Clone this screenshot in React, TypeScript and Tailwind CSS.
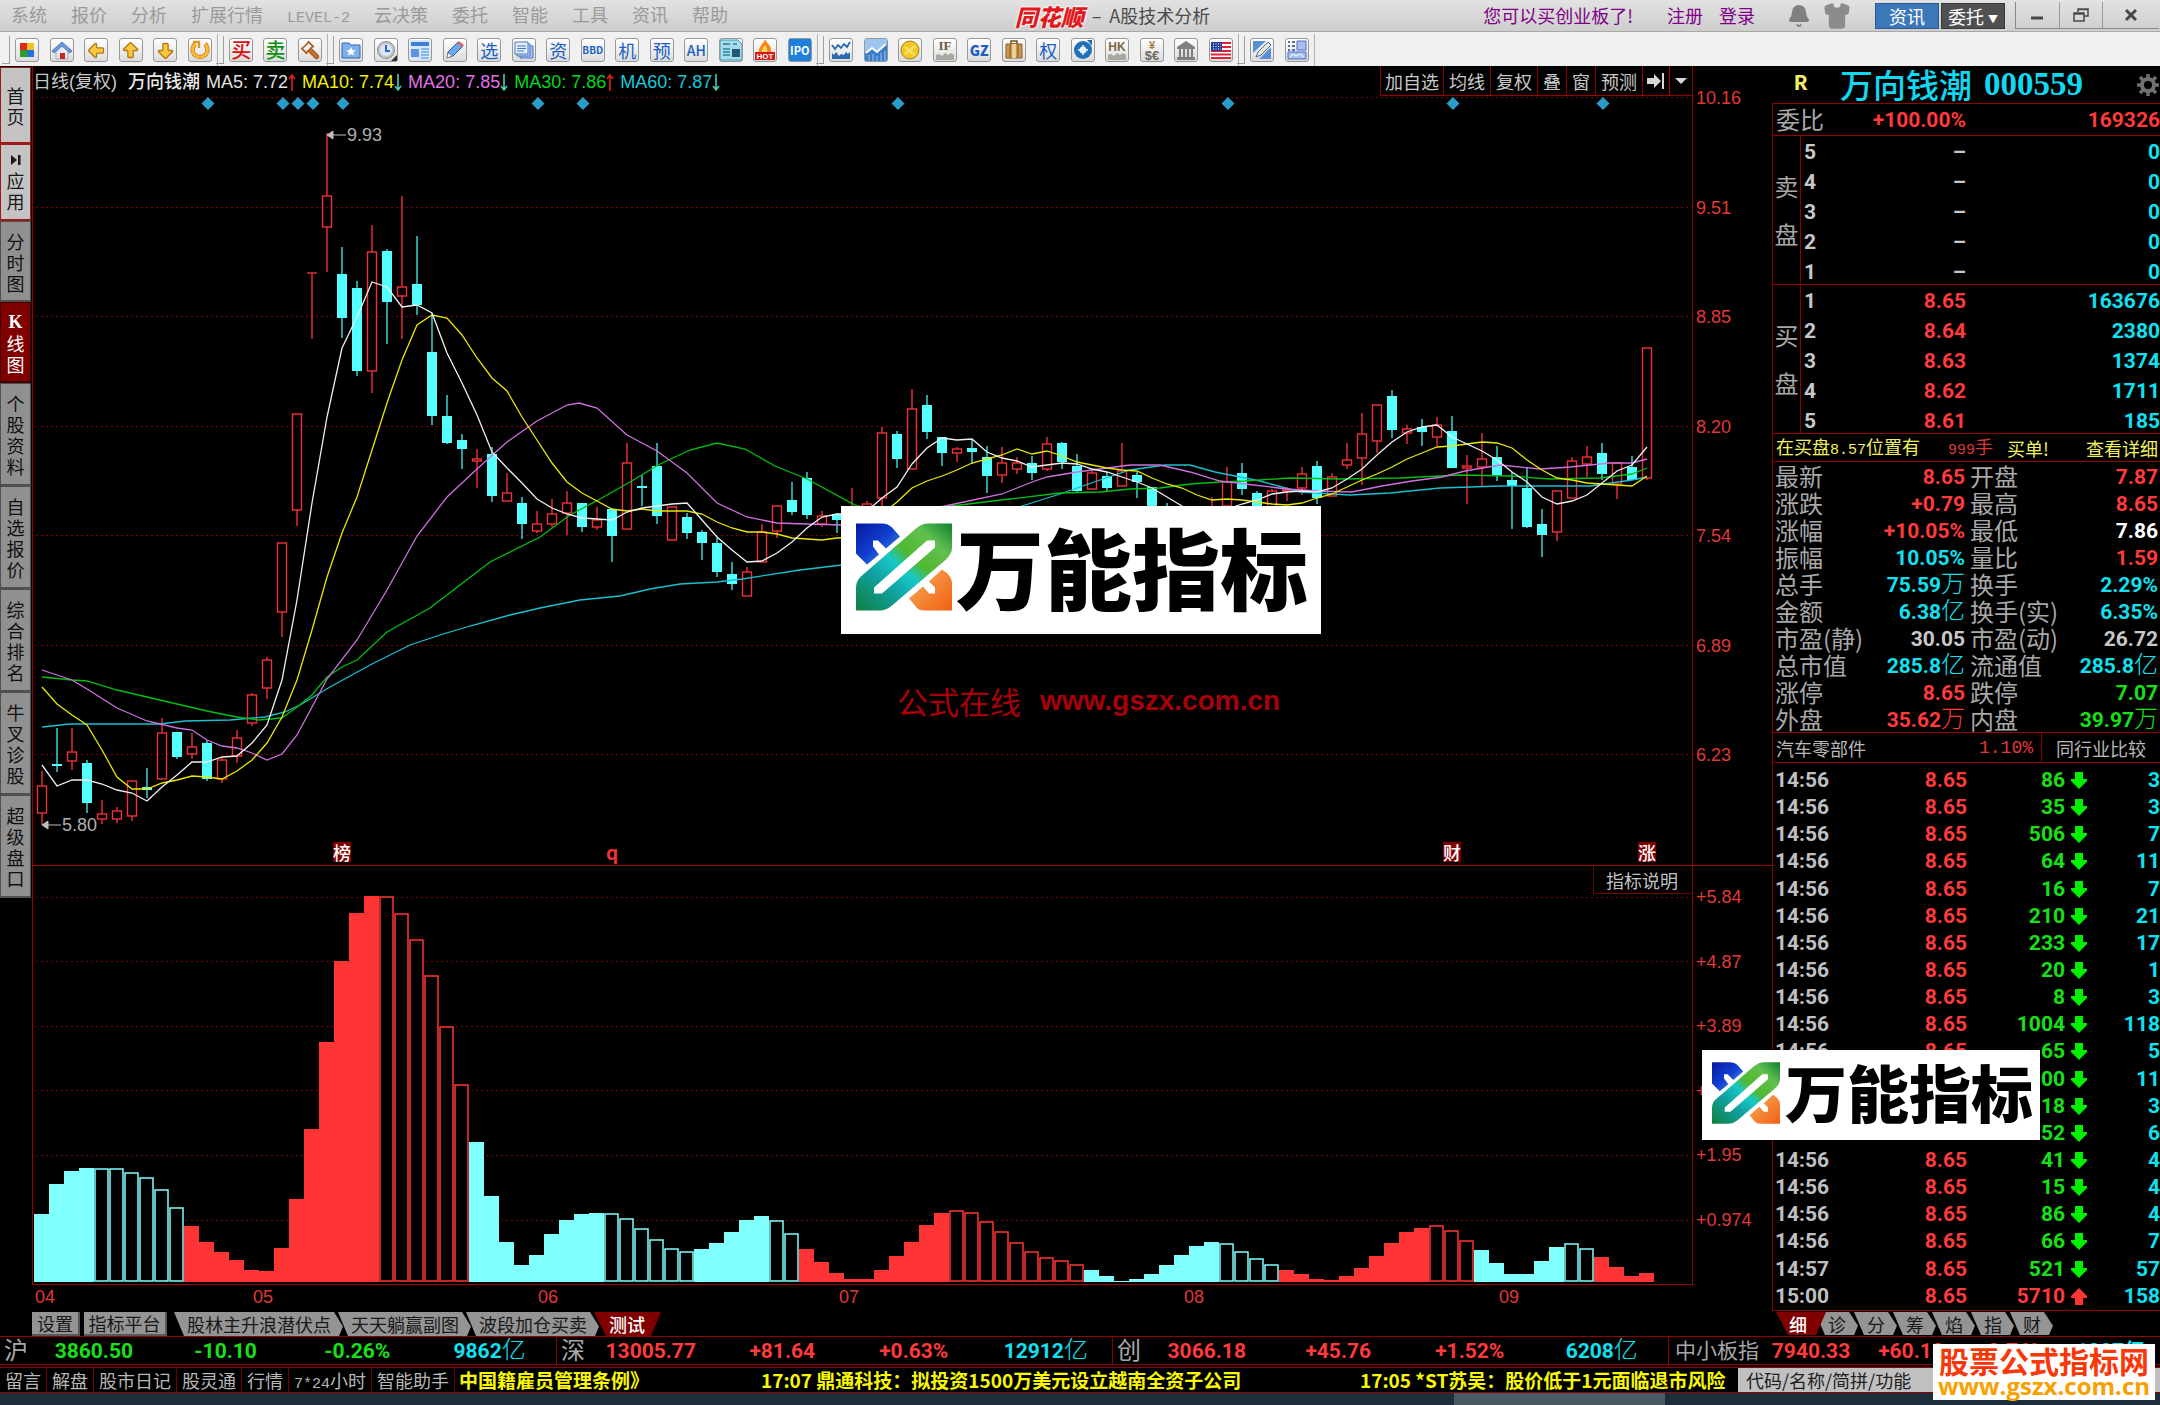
import React from 'react';
import { ArrowBigDown, ArrowBigLeft, ArrowBigUp, Bell, Gavel, Shirt } from 'lucide-react';

type Candle = [high: number, top: number, bottom: number, low: number, up: 0 | 1];
type Point = [number, number];

const FIRST_X = 42;
const STEP = 15;

// high, body top, body bottom, low, rising
const candles: (Candle | null)[] = [
  [771, 786, 813, 825, 1], [728, 764, 766, 772, 0], [728, 752, 761, 770, 1], [760, 763, 803, 813, 0],
  [800, 814, 819, 824, 1], [807, 811, 819, 823, 1], [780, 781, 816, 821, 1], [768, 787, 790, 798, 0],
  [718, 733, 779, 779, 1], [732, 732, 757, 759, 0], [733, 747, 754, 759, 1], [740, 743, 779, 781, 0],
  [757, 760, 779, 783, 1], [730, 738, 756, 763, 1], [693, 695, 723, 726, 1], [657, 660, 688, 699, 1],
  [543, 543, 612, 637, 1], [414, 414, 510, 526, 1], [273, 273, 273, 339, 1], [133, 196, 227, 272, 1],
  [247, 274, 318, 338, 0], [281, 288, 371, 376, 0], [225, 252, 371, 393, 1], [249, 251, 302, 344, 0],
  [196, 287, 296, 339, 1], [236, 284, 305, 315, 0], [313, 352, 416, 425, 0], [395, 416, 443, 444, 0],
  [434, 440, 449, 469, 0], [449, 459, 461, 488, 1], [447, 454, 496, 502, 0], [473, 493, 501, 501, 1],
  [497, 503, 524, 539, 0], [511, 524, 531, 533, 1], [499, 514, 524, 527, 1], [491, 503, 513, 535, 1],
  [503, 503, 527, 532, 0], [507, 520, 527, 530, 1], [509, 509, 536, 562, 0], [443, 463, 529, 529, 1],
  [475, 486, 488, 506, 0], [443, 466, 516, 524, 0], [507, 507, 540, 540, 1], [513, 517, 533, 539, 0],
  [530, 532, 543, 560, 0], [538, 543, 572, 577, 0], [562, 574, 584, 590, 0], [567, 572, 596, 596, 1],
  [524, 532, 562, 562, 1], [505, 506, 531, 538, 1], [482, 500, 512, 515, 0], [472, 478, 515, 519, 0],
  [511, 516, 524, 527, 1], [513, 514, 520, 533, 0], [488, 509, 530, 530, 1], [501, 504, 520, 520, 1],
  [427, 433, 498, 507, 1], [431, 434, 459, 468, 0], [389, 409, 469, 469, 1], [395, 405, 432, 439, 0],
  [437, 437, 453, 466, 0], [447, 449, 453, 462, 1], [440, 448, 452, 464, 0], [446, 457, 476, 493, 0],
  [447, 463, 475, 483, 1], [457, 463, 469, 474, 1], [456, 463, 473, 480, 0], [437, 444, 469, 471, 1],
  [442, 443, 462, 469, 0], [454, 466, 491, 493, 0], [470, 473, 489, 489, 1], [472, 476, 488, 492, 0],
  [443, 471, 486, 486, 1], [472, 475, 482, 498, 0], [487, 487, 515, 515, 0], [503, 512, 525, 525, 0],
  null, null, [497, 508, 520, 520, 1], [467, 482, 506, 506, 1],
  [463, 473, 489, 495, 0], [491, 493, 510, 510, 0], [489, 491, 510, 510, 1], [487, 490, 491, 501, 1],
  [467, 474, 488, 495, 1], [461, 466, 498, 504, 0], [473, 477, 496, 496, 1], [443, 460, 465, 469, 1],
  [413, 434, 458, 485, 1], [405, 405, 441, 453, 1], [390, 396, 430, 438, 0], [425, 429, 433, 444, 1],
  [419, 427, 432, 446, 0], [417, 425, 437, 446, 1], [416, 431, 468, 468, 0], [455, 466, 468, 504, 1],
  [433, 459, 467, 486, 1], [446, 457, 475, 481, 0], [472, 480, 486, 529, 0], [467, 488, 527, 528, 0],
  [509, 524, 535, 557, 0], [491, 491, 532, 541, 1], [457, 461, 498, 498, 1], [446, 457, 464, 477, 1],
  [443, 453, 474, 480, 0], [463, 463, 484, 499, 1], [456, 467, 480, 480, 0], [348, 348, 478, 480, 1],
];

const ma5 = [
  765, 786, 780, 780, 784, 790, 793, 801, 787, 775, 762, 762, 757, 756, 743, 725, 680, 600, 503, 417, 348, 317, 282,
  287, 307, 305, 313, 353, 383, 415, 452, 468, 483, 499, 508, 514, 518, 519, 520, 512, 508, 506, 504, 503, 520, 537,
  550, 562, 561, 553, 542, 528, 517, 514, 514, 511, 498, 487, 464, 448, 438, 440, 439, 452, 458, 461, 467, 465, 463,
  464, 469, 472, 477, 482, 488, 497, 506, 512, 512, 509, 504, 500, 494, 492, 491, 492, 488, 479, 469, 455, 442, 432,
  427, 425, 437, 444, 451, 460, 472, 482, 497, 504, 501, 495, 483, 471, 465, 447,
];
const ma10 = [
  687, 704, 715, 725, 750, 777, 789, 789, 783, 780, 776, 777, 779, 771, 760, 743, 717, 680, 630, 577, 533, 497, 450,
  403, 360, 325, 315, 318, 335, 358, 378, 391, 417, 440, 463, 482, 493, 501, 509, 511, 509, 511, 511, 511, 514, 522,
  528, 532, 532, 534, 538, 539, 540, 538, 537, 526, 514, 502, 488, 481, 476, 470, 463, 459, 455, 449, 454, 451, 456,
  462, 465, 468, 470, 471, 478, 484, 488, 495, 500, 499, 500, 502, 504, 505, 503, 498, 494, 487, 480, 474, 467, 459,
  453, 447, 446, 444, 442, 443, 448, 460, 470, 478, 480, 483, 484, 485, 486, 476,
];
const ma20: Point[] = [
  [42, 670], [57, 675], [72, 680], [87, 689], [117, 708], [147, 721], [177, 728], [192, 730], [207, 740], [222, 746],
  [237, 748], [252, 753], [267, 760], [282, 754], [297, 735], [312, 707], [327, 679], [357, 640], [387, 590],
  [417, 536], [447, 497], [477, 469], [507, 442], [537, 421], [567, 405], [579, 403], [597, 408], [627, 435],
  [657, 451], [687, 473], [717, 503], [747, 517], [777, 523], [807, 524], [842, 525], [900, 517], [945, 506],
  [1002, 494], [1032, 482], [1047, 477], [1077, 472], [1107, 468], [1130, 465], [1160, 465], [1190, 472], [1220, 481],
  [1245, 484], [1287, 489], [1317, 491], [1352, 492], [1382, 486], [1412, 481], [1442, 477], [1465, 471], [1500, 465],
  [1540, 469], [1570, 467], [1610, 463], [1632, 463], [1647, 459],
];
const ma30: Point[] = [
  [42, 677], [72, 680], [87, 681], [117, 690], [147, 697], [177, 704], [207, 711], [237, 717], [258, 720], [282, 718],
  [297, 707], [312, 695], [327, 677], [342, 667], [357, 660], [387, 632], [430, 608], [460, 585], [490, 562],
  [540, 537], [570, 515], [600, 499], [630, 482], [660, 464], [690, 450], [717, 443], [745, 449], [775, 466],
  [807, 479], [857, 506], [900, 512], [960, 505], [1010, 499], [1060, 493], [1100, 492], [1130, 489], [1160, 488],
  [1190, 484], [1220, 482], [1245, 481], [1290, 478], [1340, 479], [1400, 478], [1460, 475], [1510, 476], [1550, 479],
  [1600, 478], [1632, 474], [1647, 468],
];
const ma60: Point[] = [
  [42, 727], [70, 724], [160, 724], [185, 721], [230, 720], [265, 717], [285, 712], [300, 705], [330, 687], [370, 665],
  [410, 645], [440, 635], [470, 626], [510, 615], [540, 608], [580, 600], [620, 596], [650, 589], [680, 584],
  [717, 582], [742, 579], [800, 570], [842, 565], [1022, 506], [1060, 494], [1100, 480], [1130, 470], [1165, 465],
  [1190, 465], [1215, 472], [1260, 481], [1300, 492], [1350, 495], [1390, 493], [1440, 488], [1500, 486], [1590, 486],
  [1632, 480], [1647, 477],
];

const diamonds = [208, 283, 298, 313, 343, 538, 583, 898, 1228, 1453, 1603];

const RED = '#ff3535';
const CYAN = '#80ffff';

const barRuns: { color: string; hollow?: boolean; tops: number[] }[] = [
  { color: CYAN, tops: [1214, 1184, 1171, 1168] },
  { color: CYAN, hollow: true, tops: [1168, 1168, 1172, 1177, 1189, 1207] },
  { color: RED, tops: [1226, 1242, 1252, 1260, 1270, 1271, 1248, 1199, 1129, 1042, 961, 913, 896] },
  { color: RED, hollow: true, tops: [896, 913, 939, 975, 1026, 1084] },
  { color: CYAN, tops: [1142, 1196, 1242, 1265, 1255, 1234, 1220, 1214, 1213] },
  { color: CYAN, hollow: true, tops: [1213, 1218, 1228, 1239, 1248, 1251] },
  { color: CYAN, tops: [1249, 1243, 1232, 1220, 1216] },
  { color: CYAN, hollow: true, tops: [1220, 1233] },
  { color: RED, tops: [1249, 1262, 1273, 1279, 1279, 1270, 1256, 1242, 1225, 1213] },
  { color: RED, hollow: true, tops: [1210, 1212, 1221, 1231, 1242, 1251, 1257, 1260, 1264] },
  { color: CYAN, tops: [1270, 1276, 1281, 1279, 1274, 1265, 1255, 1246, 1242] },
  { color: CYAN, hollow: true, tops: [1243, 1251, 1258, 1264] },
  { color: RED, tops: [1270, 1274, 1279, 1280, 1276, 1268, 1256, 1243, 1232, 1228] },
  { color: RED, hollow: true, tops: [1225, 1230, 1240] },
  { color: CYAN, tops: [1250, 1263, 1274, 1274, 1261, 1247] },
  { color: CYAN, hollow: true, tops: [1243, 1248] },
  { color: RED, tops: [1257, 1267, 1276, 1273] },
];
const bars = barRuns.flatMap((run) => run.tops.map((top) => ({ top, color: run.color, hollow: run.hollow })));

const menus = ['系统', '报价', '分析', '扩展行情', 'LEVEL-2', '云决策', '委托', '智能', '工具', '资讯', '帮助'];
const sideTabs = ['首页', '应用', '分时图', 'K线图', '个股资料', '自选报价', '综合排名', '牛叉诊股', '超级盘口'];

const maLegend = [
  { text: 'MA5: 7.72', color: 'text-[#e0e0e0]', up: true },
  { text: 'MA10: 7.74', color: 'text-[#f0f000]', up: false },
  { text: 'MA20: 7.85', color: 'text-[#e070e8]', up: false },
  { text: 'MA30: 7.86', color: 'text-[#00d818]', up: true },
  { text: 'MA60: 7.87', color: 'text-[#18c8d8]', up: false },
];

const sells = [['5', '–', '0'], ['4', '–', '0'], ['3', '–', '0'], ['2', '–', '0'], ['1', '–', '0']];
const buys = [
  ['1', '8.65', '163676'], ['2', '8.64', '2380'], ['3', '8.63', '1374'], ['4', '8.62', '1711'], ['5', '8.61', '185'],
];

const R = 'text-[#ff3a3a]';
const C = 'text-[#10e0f0]';
const G = 'text-[#18e018]';
const W = 'text-[#c8c8c8]';

const quotes = [
  ['最新', '8.65', '', R, '开盘', '7.87', '', R],
  ['涨跌', '+0.79', '', R, '最高', '8.65', '', R],
  ['涨幅', '+10.05%', '', R, '最低', '7.86', '', 'text-white'],
  ['振幅', '10.05%', '', C, '量比', '1.59', '', R],
  ['总手', '75.59', '万', C, '换手', '2.29%', '', C],
  ['金额', '6.38', '亿', C, '换手(实)', '6.35%', '', C],
  ['市盈(静)', '30.05', '', W, '市盈(动)', '26.72', '', W],
  ['总市值', '285.8', '亿', C, '流通值', '285.8', '亿', C],
  ['涨停', '8.65', '', R, '跌停', '7.07', '', G],
  ['外盘', '35.62', '万', R, '内盘', '39.97', '万', G],
];

const ticks: [string, number, number][] = [
  ['14:56', 86, 3], ['14:56', 35, 3], ['14:56', 506, 7], ['14:56', 64, 11], ['14:56', 16, 7], ['14:56', 210, 21],
  ['14:56', 233, 17], ['14:56', 20, 1], ['14:56', 8, 3], ['14:56', 1004, 118], ['14:56', 65, 5], ['14:56', 100, 11],
  ['14:56', 18, 3], ['14:56', 52, 6], ['14:56', 41, 4], ['14:56', 15, 4], ['14:56', 86, 4], ['14:56', 66, 7],
  ['14:57', 521, 57], ['15:00', 5710, 158],
];

const indexes = [
  { name: '沪', values: ['3860.50', '-10.10', '-0.26%', '9862'], color: G },
  { name: '深', values: ['13005.77', '+81.64', '+0.63%', '12912'], color: R },
  { name: '创', values: ['3066.18', '+45.76', '+1.52%', '6208'], color: R },
];

const num = "font-['Roboto','Noto_Sans_CJK_SC',sans-serif] text-[21px] font-bold";

function Glyph({ color, size = 'text-[18px]', children }: { color: string; size?: string; children: React.ReactNode }) {
  return <span className={`${color} ${size} leading-none whitespace-nowrap`}>{children}</span>;
}

function Svg({ children }: { children: React.ReactNode }) {
  return (
    <svg viewBox="0 0 22 22" className="size-[22px]" aria-hidden="true">
      {children}
    </svg>
  );
}

const blue = 'text-[#1c5fc0]';
const arrow = 'size-[21px] fill-[#ffc83c] text-[#b07818]';

const toolGroups: { cols: string; tools: [string, React.ReactNode][] }[] = [
  {
    cols: 'w-[207px]',
    tools: [
      ['板块', <Svg><path d="M4 4h7v7H4z" fill="#e02818" /><path d="M11 4h7v7h-7z" fill="#f0c020" /><path d="M4 11h7v7H4z" fill="#28a020" /><path d="M11 11h7v7h-7z" fill="#2070e0" /></Svg>],
      ['主页', <Svg><path d="M5 11v9h12v-9l-6-5z" fill="#e8e8f0" stroke="#a0a8b8" /><path d="M9 14h5v6H9z" fill="#c02820" /><path d="M1 12 11 3l10 9-2 2-8-7-8 7z" fill="#6c98dc" stroke="#3868b0" strokeWidth=".8" /></Svg>],
      ['后退', <ArrowBigLeft className={arrow} strokeWidth={1.5} />],
      ['上一个', <ArrowBigUp className={arrow} strokeWidth={1.5} />],
      ['下一个', <ArrowBigDown className={arrow} strokeWidth={1.5} />],
      ['刷新', <Svg><path d="M6 5a7.500 7.500 0 1 0 10 0" fill="none" stroke="#b87818" strokeWidth="4.400" /><path d="M6 5a7.500 7.500 0 1 0 10 0" fill="none" stroke="#ffb830" strokeWidth="3" /><path d="M4 3h6v6" fill="none" stroke="#e09820" strokeWidth="2.400" /></Svg>],
    ],
  },
  {
    cols: 'w-[103px]',
    tools: [
      ['买入', <Glyph color="text-[#d81010] font-medium" size="text-[20px]">买</Glyph>],
      ['卖出', <Glyph color="text-[#109010] font-medium" size="text-[20px]">卖</Glyph>],
      ['交易', <Gavel className="size-[20px] -scale-x-100 fill-[#c87830] text-[#b06020]" />],
    ],
  },
  {
    cols: 'w-[483px]',
    tools: [
      ['自选', <Svg><path d="M2 4h7l2 2h9v13H2z" fill="#7fb0ea" stroke="#2f68b8" /><path d="m11 8 1.4 3 3.2.4-2.4 2 .7 3.2-2.9-1.7-2.9 1.7.7-3.2-2.4-2 3.2-.4z" fill="#fff" /></Svg>],
      ['时钟', <Svg><circle cx="11" cy="11" r="8.5" fill="#c0c4cc" stroke="#888c94" /><circle cx="11" cy="11" r="6" fill="#dce8fa" /><path d="M11 6v6h4" fill="none" stroke="#3068c0" strokeWidth="2" /><path d="M22 16v6h-6z" fill="#333" /></Svg>],
      ['资讯', <Svg><path d="M1 1h20v20H1z" fill="#d8e8fc" /><path d="M2 3h18v4H2z" fill="#3c80d8" /><path d="M2 10h8v8H2z" fill="#5c94e0" /><path d="M12 10h8M12 13h8M12 16h8M12 19h8" stroke="#3c80d8" /></Svg>],
      ['画线', <Svg><path d="m3 19 1-6L14 3l5 4L9 17z" fill="#6ca8e8" stroke="#2860a8" /><path d="m13 4 2-2 5 4-2 2z" fill="#e06060" /><path d="m3 19 1-5 4 3z" fill="#fff" stroke="#777" strokeWidth=".6" /></Svg>],
      ['选股', <Glyph color={blue}>选</Glyph>],
      ['报表', <Svg><path d="M7 7h13v12H7z" fill="#a8c4ec" stroke="#4878c0" /><path d="M4 5h13v12H4z" fill="#c4d8f4" stroke="#4878c0" /><path d="M2 3h13v12H2z" fill="#e4eefc" stroke="#4878c0" /><path d="M4 7h9M4 9.500h9M4 12h7" stroke="#4878c0" /></Svg>],
      ['资金', <Glyph color={blue}>资</Glyph>],
      ['BBD', <Glyph color={blue} size="text-[10px] font-bold">BBD</Glyph>],
      ['机构', <Glyph color={blue}>机</Glyph>],
      ['预测', <Glyph color={blue}>预</Glyph>],
      ['AH股', <Glyph color={blue} size="text-[14px] font-medium">AH</Glyph>],
      ['研报', <Svg><path d="M0 1h18l4 4v16H0z" fill="#a8dcec" stroke="#3898b8" /><path d="M3 5h7M13 5h4M3 10h7M3 13h7M3 16h7" stroke="#2c80a0" strokeWidth="1.500" /><path d="M12 10h8v8h-8z" fill="#205878" /></Svg>],
      ['热点', <Svg><path d="M11 0c1 4 7 6 6 13H5C4 8 9 6 11 0z" fill="#f88818" /><path d="M11 6c1 3 3 4 2 7H8c-1-3 2-4 3-7z" fill="#ffd860" /><path d="M1 13h20v8H1z" fill="#d81818" /><text x="11" y="20" textAnchor="middle" fontSize="8" fontWeight="700" fontFamily="Liberation Sans" fill="#fff">HOT</text></Svg>],
      ['新股', <span className="grid size-[22px] place-items-center bg-[#1c80dc] text-[11px] leading-none font-bold text-white">IPO</span>],
    ],
  },
  {
    cols: 'w-[414px]',
    tools: [
      ['分时', <Svg><path d="m2 6 3 4 3-4 3 3 3-4 3 3 3-5" fill="none" stroke="#2c68b0" strokeWidth="1.800" /><path d="M2 20v-6l2 2 2-3 3 4 2-2 3 1 2-3 2 2 2-2v7z" fill="#2c68b0" /></Svg>],
      ['走势', <Svg><path d="M0 0h22v22H0z" fill="#9cc4f0" /><path d="M0 22v-8l7-5 5 4 10-9v18z" fill="#3c7cc8" /><path d="m1 14 6-5 5 4 9-8" fill="none" stroke="#fff" strokeWidth="1.800" /><path d="M4 16v6m4-7v7m4-5v5m4-8v8m4-10v10" stroke="#9cc4f0" /></Svg>],
      ['黄金', <Svg><circle cx="11" cy="11" r="9" fill="#f0c828" stroke="#a88010" /><path d="M6 15 16 7M6 8l10 8" stroke="#f8e060" strokeWidth="2.500" /></Svg>],
      ['股指', <Svg><path d="M2 21v-5l3-1 3 2 3-3 3 2 3-2 3 2v5z" fill="#a8a8a0" /><text x="11" y="11" textAnchor="middle" fontSize="13" fontWeight="700" fontFamily="Liberation Serif" fill="#70583c">IF</text></Svg>],
      ['国债', <Glyph color={blue} size="text-[14px] font-black">GZ</Glyph>],
      ['基金', <Svg><path d="M8 2h6v3H8z" fill="none" stroke="#785020" strokeWidth="1.500" /><path d="M3 5h16v14H3z" fill="#c89850" stroke="#886028" /><path d="M7 5v14M15 5v14" stroke="#a87838" strokeWidth="2" /><path d="M9 5h4v14H9z" fill="#ecd098" /></Svg>],
      ['权证', <Glyph color={blue}>权</Glyph>],
      ['期权', <Svg><circle cx="11" cy="11" r="9" fill="#2070b8" /><path d="M15 1h5v6z" fill="#2070b8" /><circle cx="11" cy="11" r="3.500" fill="#e8f2fc" /><path d="M11 6v10M6 11h10" stroke="#e8f2fc" strokeWidth="1.500" /></Svg>],
      ['港股', <Svg><path d="M2 21v-5l3-1 3 2 3-3 3 2 3-2 3 2v5z" fill="#a8a8a0" /><text x="11" y="12" textAnchor="middle" fontSize="12" fontWeight="700" fontFamily="Liberation Sans" fill="#806848">HK</text></Svg>],
      ['外汇', <Svg><text x="11" y="10" textAnchor="middle" fontSize="11" fontWeight="700" fontFamily="Liberation Sans" fill="#a07838">¥</text><text x="11" y="21" textAnchor="middle" fontSize="13" fontWeight="700" fontFamily="Liberation Sans" fill="#706858">$€</text></Svg>],
      ['银行', <Svg><path d="m11 2 9 6v2H2V8z" fill="#808080" /><path d="M5 10v8m4-8v8m4-8v8m4-8v8" stroke="#808080" strokeWidth="2.200" /><path d="M2 18h18v3H2z" fill="#808080" /></Svg>],
      ['美股', <Svg><path d="M1 3h20v17H1z" fill="#fff" /><path d="M1 4h20M1 8h20M1 12h20M1 15.500h20M1 19h20" stroke="#d82838" strokeWidth="2" /><path d="M1 3h11v9H1z" fill="#283c98" /><path d="M3 5h8M3 7.500h8M3 10h8" stroke="#fff" strokeDasharray="1 1.500" /></Svg>],
    ],
  },
  {
    cols: 'w-[69px]',
    tools: [
      ['指标', <Svg><path d="M2 2h13L2 14zM20 8v12H8z" fill="#5890d8" /><path d="m5 18 2-5L17 3l3 3L10 16z" fill="#e8e8d8" stroke="#4868a0" /></Svg>],
      ['版面', <Svg><path d="M2 3h2m2 0h3M2 7h2m2 0h3M2 11h2m2 0h3" stroke="#5070b0" strokeWidth="2" /><path d="M11 2h9v9h-9zM2 13h18v7H2z" fill="#a8c0f0" stroke="#5070c0" /><path d="m4 18 3-3 3 2 4-2 4 3" fill="none" stroke="#fff" /></Svg>],
    ],
  },
];

function TitleBar() {
  return (
    <header className="flex h-[31px] items-center bg-linear-to-b from-[#e2e2e2] to-[#cecece] text-[18px] text-[#9a9a9a]">
      <nav className="flex flex-1 items-baseline gap-6 pl-[11px]">
        {menus.map((m) => (
          <button key={m} className={m === 'LEVEL-2' ? "font-['Liberation_Mono',monospace] text-[15px]" : ''}>
            {m}
          </button>
        ))}
      </nav>
      <h1 className="flex items-center gap-2 pl-[54px] text-[#4a4a4a]">
        <span className="text-[23px] leading-7 font-black text-[#e01820] italic [text-shadow:0_0_2px_#fff,0_0_2px_#fff,0_0_3px_#fff]">
          同花顺
        </span>
        <span>–</span>
        <span>A股技术分析</span>
      </h1>
      <div className="flex flex-1 items-center justify-end">
        <a href="#gem" className="mr-[34px] text-[#800088]">您可以买创业板了!</a>
        <a href="#register" className="mr-4 text-[#800088]">注册</a>
        <a href="#login" className="mr-8 text-[#800088]">登录</a>
        <button aria-label="消息" className="mr-3"><Bell className="size-6 fill-[#808080] text-[#808080]" /></button>
        <button aria-label="换肤" className="mr-6"><Shirt className="size-7 fill-[#8c8c8c] text-[#8c8c8c]" /></button>
        <button className="mr-0.5 h-[26px] w-16 border border-[#2c5a90] bg-[#3c78b8] leading-none text-white">资讯</button>
        <button className="mr-2.5 h-[26px] w-16 border border-[#383838] bg-[#505050] leading-none text-white">
          委托<span className="ml-1 align-middle text-[10px]">▼</span>
        </button>
        <div className="mr-px flex h-[27px] w-[144px] self-start border-b border-l border-[#888] text-[#484848]">
          <button aria-label="最小化" className="grid flex-1 place-items-center border-r border-[#999]">
            <svg viewBox="0 0 16 16" className="size-4"><path d="M2 11h12" stroke="currentColor" strokeWidth="3" /></svg>
          </button>
          <button aria-label="还原" className="grid flex-1 place-items-center border-r border-[#999]">
            <svg viewBox="0 0 16 16" className="size-4" fill="none" stroke="currentColor">
              <path d="M5 5V2h10v7h-4M5 2.500h10" strokeWidth="1.500" /><path d="M1 6h10v8H1zM1 7h10" strokeWidth="1.500" />
            </svg>
          </button>
          <button aria-label="关闭" className="grid w-[56px] place-items-center">
            <svg viewBox="0 0 16 16" className="size-4"><path d="m3 3 10 10M13 3 3 13" stroke="currentColor" strokeWidth="3" /></svg>
          </button>
        </div>
      </div>
    </header>
  );
}

function Toolbar() {
  return (
    <div className="flex h-[35px] items-center border-t border-[#a8a8a8] bg-[#f0f0f0] pt-0.5">
      {toolGroups.map((g, i) => (
        <div key={i} className="flex items-center">
          <div className="ml-0.5 h-7 w-2 border-r border-b border-[#a0a0a0]" />
          <div className={`grid auto-cols-fr grid-flow-col justify-items-center ${g.cols}`}>
            {g.tools.map(([name, icon]) => (
              <button
                key={name}
                aria-label={name}
                title={name}
                className="grid size-6 place-items-center rounded-[3px] border border-[#989898] bg-linear-to-b from-white to-[#dcdcdc]"
              >
                {icon}
              </button>
            ))}
          </div>
          <div className="-mr-1 h-8 border-r border-[#b0b0b0]" />
        </div>
      ))}
    </div>
  );
}

function SideBar() {
  return (
    <nav className="flex w-8 shrink-0 flex-col bg-black pt-px">
      {sideTabs.map((t, i) => {
        const look =
          i < 2
            ? 'bg-[#c4c4c4] border-[#a01818] text-[#181818]'
            : i === 3
              ? 'bg-[#800000] border-[#400000] text-white'
              : 'bg-[#909090] border-[#505050] text-[#101010]';
        const height = i < 2 ? 'h-[77px]' : i < 4 ? 'h-[81px]' : 'h-[103px]';
        return (
          <button
            key={t}
            className={`mr-px flex flex-col items-center justify-center border border-b-2 pt-0.5 text-[18px] leading-[21px] ${look} ${height}`}
          >
            {i === 1 && (
              <svg viewBox="0 0 12 12" className="mb-1 size-3"><path d="M1 1v10l6-5zM8 1h2.500v10H8z" fill="#181818" /></svg>
            )}
            {[...t].map((ch) => (
              <span key={ch} className={ch === 'K' ? "font-['Liberation_Serif',serif] font-bold" : ''}>{ch}</span>
            ))}
          </button>
        );
      })}
    </nav>
  );
}

function BrandMark({ className }: { className: string }) {
  return (
    <svg viewBox="0 0 96 87" className={className} aria-hidden="true">
      <defs>
        <linearGradient id="band" x1="0" y1="1" x2="1" y2="0">
          <stop offset="0" stopColor="#108040" /><stop offset=".3" stopColor="#10a0a0" />
          <stop offset=".48" stopColor="#18c8c8" /><stop offset=".6" stopColor="#50b830" />
          <stop offset=".8" stopColor="#60c050" /><stop offset="1" stopColor="#108030" />
        </linearGradient>
        <linearGradient id="corner" x1="0" y1="0" x2="1" y2="1">
          <stop offset="0" stopColor="#0818a0" /><stop offset=".5" stopColor="#1040d0" /><stop offset="1" stopColor="#50a8e8" />
        </linearGradient>
        <linearGradient id="base" x1="0" y1="0" x2="1" y2="1">
          <stop offset="0" stopColor="#f8b060" /><stop offset="1" stopColor="#f06010" />
        </linearGradient>
      </defs>
      <path d="M0 0h26q6 0 10 4l8 9-14 12-8-8h-5v6l6 8-12 10L0 30z" fill="url(#corner)" />
      <path d="M86 46q10 6 10 14v27H68q-6 0-9-5l-6-7 14-12 6 7h6v-6l-6-6z" fill="url(#base)" />
      <path
        d="M96 0v24q0 6-6 12L36 82q-6 5-12 5H0V64q0-7 6-12L60 5q6-5 12-5zM79 17h-8L18 64v6h8l53-46z"
        fill="url(#band)"
        fillRule="evenodd"
      />
    </svg>
  );
}

const toPoints = (ys: number[]) => ys.map((y, i) => `${FIRST_X + i * STEP},${y}`).join(' ');
const join = (pts: Point[]) => pts.map((p) => p.join(',')).join(' ');
const left = (x: number) => ({ left: `${((x - 33) / 1659) * 100}%` });

function CandleChart() {
  const lines = [
    [join(ma60), '#18c0d0'], [join(ma30), '#00c010'], [join(ma20), '#d070e0'], [toPoints(ma10), '#e8e800'], [toPoints(ma5), '#f0f0f0'],
  ];
  return (
    <svg viewBox="33 96 1659 769" preserveAspectRatio="none" className="block h-[769px] w-full" role="img" aria-label="K线">
      {[97, 207, 316, 426, 535, 645, 754].map((y) => (
        <path key={y} d={`M36 ${y}.5H1692`} stroke="#800000" strokeDasharray="2 3" />
      ))}
      {diamonds.map((x) => (
        <path key={x} d={`M${x} 97l6.500 6.500-6.500 6.500-6.500-6.500z`} fill="#2a9cca" />
      ))}
      {candles.map((c, i) => {
        if (!c) return null;
        const [high, top, bottom, low, up] = c;
        const x = FIRST_X + i * STEP;
        return up ? (
          <g key={i} stroke="#f03038" strokeWidth="1.400" fill="none">
            <path d={`M${x} ${high}V${top}M${x} ${bottom}V${low}`} />
            <rect x={x - 4.5} y={top} width="9" height={bottom - top} />
            {bottom === top && <path d={`M${x - 5} ${top}h10`} />}
          </g>
        ) : (
          <g key={i} fill="#54ffff">
            <path d={`M${x} ${high}V${low}`} stroke="#40e0e0" strokeWidth="1.400" />
            <rect x={x - 5} y={top} width="10" height={bottom - top} />
          </g>
        );
      })}
      {lines.map(([pts, color]) => (
        <polyline key={color} points={pts} fill="none" stroke={color} strokeWidth="1.300" />
      ))}
    </svg>
  );
}

function WaveChart() {
  return (
    <svg viewBox="33 866 1659 418" preserveAspectRatio="none" className="block h-[418px] w-full" role="img" aria-label="副图指标">
      {[897, 961, 1026, 1090, 1155, 1220].map((y) => (
        <path key={y} d={`M36 ${y}.5H1692`} stroke="#800000" strokeDasharray="2 3" />
      ))}
      {bars.map((b, i) => {
        const x = 34 + i * STEP;
        return b.hollow ? (
          <rect key={i} x={x + 1} y={b.top + 1} width="13" height={1280 - b.top} fill="#000" stroke={b.color} strokeWidth="1.500" />
        ) : (
          <rect key={i} x={x} y={b.top} width="15" height={1282 - b.top} fill={b.color} shapeRendering="crispEdges" />
        );
      })}
    </svg>
  );
}

function ChartHeader() {
  return (
    <div className="flex h-[30px] items-stretch text-[18px] text-[#c8c8c8]">
      <div className="flex flex-1 items-center gap-1.5 pt-px font-['Liberation_Sans','Noto_Sans_CJK_SC',sans-serif] leading-none">
        <span>日线(复权)</span>
        <strong className="ml-[5px] font-medium text-[#e8e8e8]">万向钱潮</strong>
        {maLegend.map((m) => (
          <span key={m.text} className={`flex items-center ${m.color}`}>
            {m.text}
            <svg viewBox="0 0 8 20" className="h-5 w-2" fill="none" stroke={m.up ? '#e02020' : '#50c8b8'} strokeWidth="1.600">
              <path d={m.up ? 'M4 19V3M1 7l3-4 3 4' : 'M4 2v16M1 14l3 4 3-4'} />
            </svg>
          </span>
        ))}
      </div>
      <div className="flex border-b border-[#900000]">
        {['加自选', '均线', '复权', '叠', '窗', '预测'].map((t) => (
          <button key={t} className="border-l border-[#900000] px-[5px] leading-none first:px-1">{t}</button>
        ))}
        <button aria-label="最新" className="border-l border-[#900000] px-[3px]">
          <svg viewBox="0 0 20 20" className="size-5"><path d="M1 7h7V3l7 7-7 7v-4H1zM16 2h2v16h-2z" fill="#d8d8d8" /></svg>
        </button>
        <button aria-label="更多" className="border-l border-[#c00000] px-[5px]">
          <svg viewBox="0 0 12 8" className="h-2 w-3"><path d="M0 1h12L6 7z" fill="#d8d8d8" /></svg>
        </button>
      </div>
    </div>
  );
}

const trapezoid =
  '[clip-path:polygon(2px_0,calc(100%-9px)_0,100%_60%,calc(100%-4px)_100%,12px_100%)] bg-[#949494] text-[#181818]';
const trapezoidActive = '[clip-path:polygon(0_0,100%_0,calc(100%-10px)_100%,12px_100%)] bg-[#800000] font-medium text-white';

function Charts() {
  return (
    <section className="flex min-w-0 flex-1 flex-col">
      <div className="flex border-b border-[#980000]">
        <div className="relative min-w-0 flex-1 border-x border-[#980000]">
          <ChartHeader />
          <CandleChart />
          <span style={left(327)} className="absolute top-[59px] flex items-center font-['Liberation_Sans'] text-[18px] leading-5 text-[#b0b0b0]">
            <svg viewBox="0 0 20 10" className="h-2.5 w-5"><path d="M6 5h13M0 5l6-4v8z" stroke="#c0c0c0" fill="#c0c0c0" /></svg>9.93
          </span>
          <span style={left(42)} className="absolute top-[749px] flex items-center font-['Liberation_Sans'] text-[18px] leading-5 text-[#b0b0b0]">
            <svg viewBox="0 0 20 10" className="h-2.5 w-5"><path d="M6 5h13M0 5l6-4v8z" stroke="#c0c0c0" fill="#c0c0c0" /></svg>5.80
          </span>
          {([['榜', 333], ['财', 1443], ['涨', 1638]] as [string, number][]).map(([t, x]) => (
            <span key={t} style={left(x)} className="absolute bottom-[3px] bg-[#800000] text-[18px] leading-5 font-medium text-white">{t}</span>
          ))}
          <span style={left(606)} className="absolute bottom-px text-[19px] leading-6 font-bold text-[#f03038]">q</span>

          <div className="absolute top-[440px] left-[808px] flex h-[128px] w-[480px] items-start bg-white pt-[17px] pl-[15px]">
            <BrandMark className="h-[88px] w-24" />
            <span className="ml-1 text-[88px] leading-[84px] font-black text-black">万能指标</span>
          </div>
          <p className="absolute top-[617px] left-[864px] flex items-center gap-[19px] leading-9 text-[#a80008]">
            <span className="text-[31px]">公式在线</span>
            <span className="font-['Liberation_Sans'] text-[28px] font-bold">www.gszx.com.cn</span>
          </p>
        </div>
        <div className="mt-[22px] flex h-[677px] w-[79px] flex-col justify-between pl-[3px] font-['Liberation_Sans'] text-[18px] leading-5 text-[#e03838]">
          {['10.16', '9.51', '8.85', '8.20', '7.54', '6.89', '6.23'].map((v) => <span key={v}>{v}</span>)}
        </div>
      </div>

      <div className="flex">
        <div className="relative min-w-0 flex-1 border-x border-b border-[#980000]">
          <WaveChart />
          <button className="absolute top-0 right-0 h-7 w-[99px] border-b border-l border-[#700000] bg-black pl-3 text-left text-[18px] leading-none text-[#c0c0c0]">
            指标说明
          </button>
        </div>
        <div className="mt-[21px] flex h-[343px] w-[79px] flex-col justify-between pl-[3px] font-['Liberation_Sans'] text-[18px] leading-5 text-[#e03838]">
          {['+5.84', '+4.87', '+3.89', '+2.92', '+1.95', '+0.974'].map((v) => <span key={v}>{v}</span>)}
        </div>
      </div>

      <div className="mr-[79px] grid h-[27px] grid-cols-[218fr_285fr_301fr_345fr_315fr_194fr] pl-[3px] font-['Liberation_Sans'] text-[18px] leading-6 text-[#e03838]">
        {['04', '05', '06', '07', '08', '09'].map((v) => <span key={v}>{v}</span>)}
      </div>

      <div className="flex h-6 text-[18px] leading-6 text-[#181818]">
        <button className="w-12 border-r-2 border-b-2 border-[#585858] bg-[#949494] leading-5">设置</button>
        <button className="ml-1 w-[83px] border-r-2 border-b-2 border-[#585858] bg-[#949494] leading-5">指标平台</button>
        <div className="ml-[5px] flex">
          <button className={`${trapezoid} pr-3 pl-[15px]`}>股林主升浪潜伏点</button>
          <button className={`${trapezoid} -ml-[7px] pr-3 pl-[15px]`}>天天躺赢副图</button>
          <button className={`${trapezoid} -ml-[7px] pr-3 pl-[15px]`}>波段加仓买卖</button>
          <button className={`${trapezoidActive} -ml-[5px] pr-4 pl-[15px]`}>测试</button>
        </div>
      </div>
    </section>
  );
}

function OrderBook({ side, rows, color }: { side: string; rows: string[][]; color: string }) {
  return (
    <div className="flex h-[149px] border-b border-[#900000]">
      <div className="flex w-7 shrink-0 flex-col items-center justify-center gap-6 border-r border-[#900000] text-[24px] leading-6 text-[#a8a8a8]">
        {[...side].map((ch) => <span key={ch}>{ch}</span>)}
      </div>
      <table className={`mt-px h-[150px] flex-1 table-fixed self-start ${num}`}>
        <tbody>
          {rows.map(([level, price, volume]) => (
            <tr key={level} className="leading-none">
              <td className="w-[42px] pl-[3px] text-[#c8c8c8]">{level}</td>
              <td className={`w-[123px] text-right ${color}`}>{price}</td>
              <td className={`text-right ${C}`}>{volume}</td>
            </tr>
          ))}
        </tbody>
      </table>
    </div>
  );
}

function QuotePanel() {
  return (
    <aside className="flex w-[388px] shrink-0 flex-col text-[18px]">
      <div className="flex h-[37px] items-center">
        <span className="w-[68px] pl-[22px] font-['Liberation_Mono'] text-[22px] font-bold text-[#f0f060]">R</span>
        <h2 className="flex flex-1 items-center gap-3 text-[33px] leading-none font-medium text-[#10d8f0]">
          万向钱潮
          <span className="font-['Liberation_Serif',serif] font-bold">000559</span>
        </h2>
        <button aria-label="设置">
          <svg viewBox="0 0 24 24" className="size-6" fill="none" stroke="#707070">
            <circle cx="12" cy="12" r="6" strokeWidth="4" />
            <path d="M12 1v4m0 14v4M1 12h4m14 0h4M4 4l3 3m10 10 3 3M20 4l-3 3M7 17l-3 3" strokeWidth="3.500" />
          </svg>
        </button>
      </div>
      <div className="border-l border-[#900000]">
        <div className={`flex h-[33px] items-center border-y border-[#900000] pt-0.5 leading-none ${num}`}>
          <span className="w-[60px] pl-[3px] text-[24px] leading-none font-normal text-[#a8a8a8]">委比</span>
          <span className={`w-[133px] text-right ${R}`}>+100.00%</span>
          <span className={`flex-1 text-right ${R}`}>169326</span>
        </div>
        <OrderBook side="卖盘" rows={sells} color="text-[#c8c8c8]" />
        <OrderBook side="买盘" rows={buys} color={R} />

        <div className="flex h-[28px] items-center border-b border-[#900000] pl-[3px] leading-none text-[#f0f060]">
          <span>在买盘<span className="font-['Liberation_Mono'] text-[15px]">8.57</span>位置有</span>
          <span className="ml-7 text-[#d83838]"><span className="font-['Liberation_Mono'] text-[15px]">999</span>手</span>
          <span className="ml-3.5">买单!</span>
          <a href="#detail" className="mr-0.5 ml-auto">查看详细</a>
        </div>

        <table className="h-[270px] w-full table-fixed leading-none text-[#a8a8a8]">
          <tbody>
            {quotes.map(([l1, v1, u1, c1, l2, v2, u2, c2]) => (
              <tr key={l1}>
                <th scope="row" className="w-[94px] pl-0.5 text-left text-[24px] font-normal whitespace-nowrap">{l1}</th>
                <td className={`w-[98px] text-right whitespace-nowrap ${num} ${c1}`}>{v1}<span className="text-[24px] leading-none font-light">{u1}</span></td>
                <th scope="row" className="w-[96px] pl-[5px] text-left text-[24px] font-normal whitespace-nowrap">{l2}</th>
                <td className={`pr-0.5 text-right whitespace-nowrap ${num} ${c2}`}>{v2}<span className="text-[24px] leading-none font-light">{u2}</span></td>
              </tr>
            ))}
          </tbody>
        </table>

        <div className="flex h-[31px] items-center border-y border-[#900000] pl-[3px] leading-none text-[#b8b8b8]">
          <span>汽车零部件</span>
          <span className="ml-auto pr-2 font-['Liberation_Mono'] text-[#e03838]">1.10%</span>
          <a href="#industry" className="flex h-full w-[119px] items-center border-l border-[#900000] pl-3.5">同行业比较</a>
        </div>

        <table className={`mt-1 h-[543px] w-full table-fixed leading-none ${num}`}>
          <tbody>
            {ticks.map(([time, vol, count], i) => {
              const up = time === '15:00';
              return (
                <tr key={i}>
                  <td className="w-[70px] pl-0.5 text-[#c0c0c0]">{time}</td>
                  <td className={`w-[124px] text-right ${R}`}>8.65</td>
                  <td className={`w-[98px] text-right ${up ? R : G}`}>{vol}</td>
                  <td className="w-7 pl-1.5">
                    <svg viewBox="0 0 16 17" className={`block h-[17px] w-4 ${up ? 'rotate-180' : ''}`}>
                      <path d="M4 0h8v7h4v2l-8 8-8-8V7h4z" fill={up ? '#ff3535' : '#00f000'} />
                    </svg>
                  </td>
                  <td className={`text-right ${C}`}>{count}</td>
                </tr>
              );
            })}
          </tbody>
        </table>
      </div>
      <div className="flex h-[25px] border-t border-[#900000] pt-px pl-1 leading-6">
        <button className={`${trapezoidActive} z-10 w-[50px] pr-[19px] pl-[13px]`}>细</button>
        {['诊', '分', '筹', '焰', '指', '财'].map((t, i) => (
          <button key={t} className={`${trapezoid} w-[45px] pr-3 pl-[15px] ${i === 0 ? '-ml-[13px]' : '-ml-1.5'}`}>{t}</button>
        ))}
      </div>
    </aside>
  );
}

function IndexBar() {
  return (
    <div className={`grid h-[29px] grid-cols-[557fr_556fr_556fr_491fr] border-y border-[#900000] leading-[29px] ${num}`}>
      {indexes.map(({ name, values, color }) => (
        <div key={name} className="grid grid-cols-[28fr_132fr_132fr_132fr_133fr] border-r border-[#900000] text-center">
          <span className="pl-1 text-[24px] leading-[29px] font-normal text-[#a8a8a8]">{name}</span>
          {values.map((v, i) => (
            <span key={v} className={`leading-[29px] whitespace-nowrap ${i === 3 ? C : color}`}>
              {v}
              {i === 3 && <span className="text-[24px] leading-none font-light">亿</span>}
            </span>
          ))}
        </div>
      ))}
      <div className="grid grid-cols-[92fr_100fr_100fr_100fr_99fr] text-center">
        <span className="pl-1 text-[21px] leading-[29px] font-normal whitespace-nowrap text-[#a8a8a8]">中小板指</span>
        <span className={`leading-[29px] ${R}`}>7940.33</span>
        <span className={`leading-[29px] ${R}`}>+60.18</span>
        <span className={`leading-[29px] ${R}`}>+0.76%</span>
        <span className={`leading-[29px] ${C}`}>1087亿</span>
      </div>
    </div>
  );
}

function NewsBar() {
  return (
    <div className="mt-0.5 flex h-[26px] items-stretch border-y border-[#900000] text-[18px] leading-6 text-[#b8b8b8]">
      {['留言', '解盘', '股市日记', '股灵通', '行情', '7*24小时', '智能助手'].map((t) => (
        <button key={t} className="shrink-0 border-r border-[#700000] px-[5px]">
          {t === '7*24小时' ? <><span className="font-['Liberation_Mono'] text-[15px]">7*24</span>小时</> : t}
        </button>
      ))}
      <div className="flex min-w-0 flex-1 overflow-hidden pl-1 text-[19px] font-bold whitespace-nowrap text-[#f8f800]">
        <a href="#n1" className="w-[302px] shrink-0">中国籍雇员管理条例》</a>
        <a href="#n2" className="w-[599px] shrink-0">17:07 鼎通科技：拟投资1500万美元设立越南全资子公司</a>
        <a href="#n3" className="shrink-0">17:05 *ST苏吴：股价低于1元面临退市风险</a>
      </div>
      <input
        aria-label="代码/名称/简拼/功能"
        placeholder="代码/名称/简拼/功能"
        className="w-[422px] shrink-0 bg-[#c0c0c0] px-2 text-[18px] placeholder:text-[#202020]"
      />
    </div>
  );
}

export default function App() {
  return (
    <div className="relative flex min-h-screen flex-col overflow-hidden bg-black font-['Noto_Sans_CJK_SC',sans-serif]">
      <TitleBar />
      <Toolbar />
      <main className="flex">
        <SideBar />
        <Charts />
        <QuotePanel />
      </main>
      <IndexBar />
      <NewsBar />
      <footer className="flex flex-1 bg-[#1c2e3a]">
        <div className="ml-[67.3%] w-[9.8%] bg-[#4a5a64]" />
      </footer>

      <div className="absolute top-[1050px] right-[120px] flex h-[90px] w-[338px] items-start bg-white pt-3 pl-2.5">
        <BrandMark className="h-[62px] w-[68px]" />
        <span className="ml-[5px] text-[62px] leading-[59px] font-black text-black">万能指标</span>
      </div>
      <a href="#home" className="absolute right-[5px] bottom-[5px] flex h-14 w-[222px] flex-col items-center bg-white font-bold whitespace-nowrap">
        <span className="text-[30px] leading-8 text-[#f83808]">股票公式指标网</span>
        <span className="font-['Open_Sans'] text-[24px] leading-5 text-[#f8a000]">www.gszx.com.cn</span>
      </a>
    </div>
  );
}
